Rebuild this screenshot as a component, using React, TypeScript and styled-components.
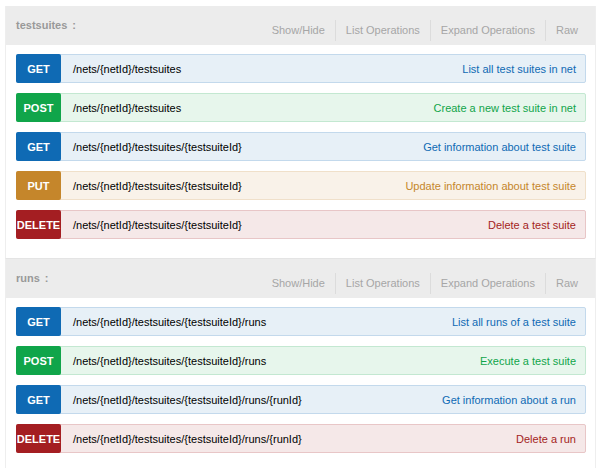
import styled, { createGlobalStyle } from 'styled-components'

type Method = 'GET' | 'POST' | 'PUT' | 'DELETE'

interface Operation {
  method: Method
  path: string
  summary: string
}

interface Resource {
  name: string
  operations: Operation[]
}

const palette: Record<Method, { solid: string; bg: string; border: string }> = {
  GET: { solid: '#0f6ab4', bg: '#e7f0f7', border: '#c3d9ec' },
  POST: { solid: '#10a54a', bg: '#e7f6ec', border: '#c3e8d1' },
  PUT: { solid: '#c5862b', bg: '#f9f2e9', border: '#f0e0ca' },
  DELETE: { solid: '#a41e22', bg: '#f5e8e8', border: '#e8c6c7' },
}

const resources: Resource[] = [
  {
    name: 'testsuites',
    operations: [
      { method: 'GET', path: '/nets/{netId}/testsuites', summary: 'List all test suites in net' },
      { method: 'POST', path: '/nets/{netId}/testsuites', summary: 'Create a new test suite in net' },
      { method: 'GET', path: '/nets/{netId}/testsuites/{testsuiteId}', summary: 'Get information about test suite' },
      { method: 'PUT', path: '/nets/{netId}/testsuites/{testsuiteId}', summary: 'Update information about test suite' },
      { method: 'DELETE', path: '/nets/{netId}/testsuites/{testsuiteId}', summary: 'Delete a test suite' },
    ],
  },
  {
    name: 'runs',
    operations: [
      { method: 'GET', path: '/nets/{netId}/testsuites/{testsuiteId}/runs', summary: 'List all runs of a test suite' },
      { method: 'POST', path: '/nets/{netId}/testsuites/{testsuiteId}/runs', summary: 'Execute a test suite' },
      { method: 'GET', path: '/nets/{netId}/testsuites/{testsuiteId}/runs/{runId}', summary: 'Get information about a run' },
      { method: 'DELETE', path: '/nets/{netId}/testsuites/{testsuiteId}/runs/{runId}', summary: 'Delete a run' },
    ],
  },
]

const links = ['Show/Hide', 'List Operations', 'Expand Operations', 'Raw']

export default function App() {
  return (
    <>
      <GlobalStyle />
      <Page>
        {resources.map(res => (
          <Section key={res.name}>
            <SectionHeader>
              <Title>
                {res.name}
                <Colon>:</Colon>
              </Title>
              <Options>
                {links.map(l => (
                  <OptionLink key={l}>{l}</OptionLink>
                ))}
              </Options>
            </SectionHeader>
            <OperationList>
              {res.operations.map((op, i) => (
                <OperationRow key={i} $method={op.method}>
                  <Badge $method={op.method}>{op.method}</Badge>
                  <Path>{op.path}</Path>
                  <Summary $method={op.method}>{op.summary}</Summary>
                </OperationRow>
              ))}
            </OperationList>
          </Section>
        ))}
      </Page>
    </>
  )
}

// GLOBAL
const GlobalStyle = createGlobalStyle`
  body {
    margin: 0;
    background: #fff;
    font-family: "Liberation Sans", Arial, sans-serif;
  }
`

// PAGE
const Page = styled.div`
  width: 591px;
  padding: 6px 0 0 5px;
`

// RESOURCE BOX
const Section = styled.div`
  border-left: 1px solid #eeeeee;
  border-right: 1px solid #eeeeee;
  border-bottom: 1px solid #e4e4e4;
  &:last-child {
    border-bottom: none;
  }
`

const SectionHeader = styled.div`
  display: flex;
  justify-content: space-between;
  align-items: flex-start;
  height: 39px;
  background: #ececec;
  padding: 0 17px 0 10px;
`

const Title = styled.h2`
  margin: 0;
  padding-top: 13px;
  font-size: 11px;
  font-weight: bold;
  color: #999;
`

const Colon = styled.span`
  margin-left: 5px;
`

const Options = styled.ul`
  display: flex;
  list-style: none;
  margin: 14px 0 0;
  padding: 0;
`

const OptionLink = styled.li`
  font-size: 11px;
  color: #a6a6a6;
  line-height: 21px;
  padding: 0 10px;
  border-left: 1px solid #dcdcdc;
  &:first-child {
    border-left: none;
  }
  &:last-child {
    padding-right: 0;
  }
`

// OPERATIONS
const OperationList = styled.div`
  display: flex;
  flex-direction: column;
  gap: 10px;
  padding: 9px 9px 19px 10px;
`

const OperationRow = styled.div<{ $method: Method }>`
  display: flex;
  align-items: center;
  height: 29px;
  box-sizing: border-box;
  background: ${p => palette[p.$method].bg};
  border: 1px solid ${p => palette[p.$method].border};
  border-radius: 2px;
`

const Badge = styled.span<{ $method: Method }>`
  display: flex;
  align-items: center;
  justify-content: center;
  width: 45px;
  height: 29px;
  margin: -1px 0 -1px -1px;
  border-radius: 2px;
  background: ${p => palette[p.$method].solid};
  color: #fff;
  font-size: 11px;
  font-weight: bold;
`

const Path = styled.span`
  flex: 1;
  padding: 1px 0 0 12px;
  font-size: 11px;
  color: #000;
`

const Summary = styled.span<{ $method: Method }>`
  padding: 1px 9px 0 0;
  font-size: 11px;
  color: ${p => palette[p.$method].solid};
`
